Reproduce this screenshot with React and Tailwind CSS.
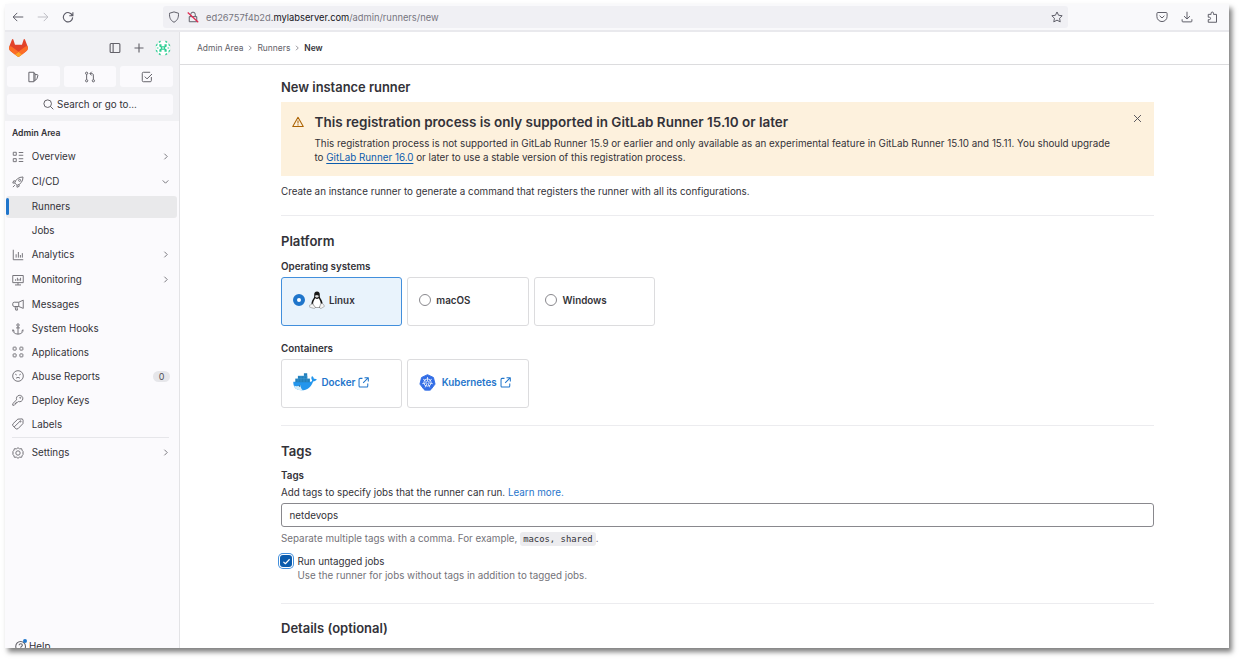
import React from "react";

const Icon = ({ children, className = "size-3", w = 1.4 }) => (
  <svg viewBox="0 0 16 16" fill="none" stroke="currentColor" strokeWidth={w} strokeLinejoin="round" className={`shrink-0 ${className}`}>
    {children}
  </svg>
);

const icons = {
  overview: <><rect x="1.7" y="1.7" width="4" height="4" /><rect x="1.7" y="10.2" width="4" height="4" /><path d="M9 2h6M9 5.700h6M9 10.300h6M9 14h6" /></>,
  rocket: <><path d="M5.200 10.800 3.600 9.200C5 4.700 8.600 1.300 14.700 1.300 14.700 7.400 11.300 11 6.800 12.400L5.200 10.800ZM4.600 6.500H2.200L1 9.300l2.600.3M9.500 11.400v2.400L6.700 15l-.3-2.600M3.800 12.200l-2.600 2.600" /><circle cx="10.200" cy="5.800" r="1.400" /></>,
  chart: <path d="M1.700 1v13.300H15M5.500 7v4.500M8.500 4v7.500M11.200 8v3.500M13.800 5.500v6" />,
  monitor: <path d="M1 2h14v9.500H1zM4 14.600h8M8 11.500v3M4.800 7v2M7.200 5v4M9.300 6.500V9M11.400 5v4" />,
  bullhorn: <path d="M9 4.300 15 1.500v11L9 10H3a2 2 0 0 1-2-2V6.300a2 2 0 0 1 2-2h6ZM9 4.300V10M4 10l1 4.800h2.300L6.500 10" />,
  hook: <><circle cx="8" cy="2.700" r="1.600" /><path d="M8 4.300V15M5.500 6.500h5M1.200 11V9M1.200 9l2.300 2M1.200 9c0 3.500 2.500 5.800 6.800 5.800s6.800-2.300 6.800-5.800l-2.300 2" /></>,
  apps: <><rect x="1.500" y="1.500" width="4" height="4" rx=".7" /><rect x="10.500" y="1.500" width="4" height="4" rx=".7" /><rect x="1.500" y="10.500" width="4" height="4" rx=".7" /><rect x="10.500" y="10.500" width="4" height="4" rx=".7" /></>,
  frown: <><circle cx="8" cy="8" r="7.100" /><path d="M5.300 11.200c1.300-1.700 4.100-1.700 5.400 0M4.300 5.500l2 1.200M11.700 5.500l-2 1.200" /></>,
  key: <><path d="M6.200 7.700A4.300 4.300 0 1 1 8.500 10L7 11.200H5.500v1.500H4V14l-1 1H1v-2.200l5.200-5.100Z" /><circle cx="11" cy="5" r=".7" /></>,
  label: <><path d="M1 8 7.800 1.500l6-.3 1 1.800-.2 4.500L8 14.300l-2.400.4L1 10.200V8ZM2.800 12 10.500 4.500" /><circle cx="11.300" cy="4.500" r=".8" /></>,
  settings: <><path d="m8 .9 1.900 1.500 3-.1.700 2.700 1.600 1.300-.9 1.700.9 1.700-1.600 1.300-.7 2.700-3-.1L8 15.100l-1.900-1.500-3 .1-.7-2.700L.8 9.700 1.700 8 .8 6.300 2.400 5l.7-2.700 3 .1z" /><circle cx="8" cy="8" r="2.900" /></>,
};

const Chevron = ({ down }) => (
  <Icon className="size-[9px] text-[#626168]" w={1.500}>
    <path d={down ? "M3 6 8 11 13 6" : "M6 3 11 8 6 13"} />
  </Icon>
);

const nav = [
  { label: "Overview", icon: "overview", h: "h-[25px]", chev: "right" },
  { label: "CI/CD", icon: "rocket", h: "h-[25px]", chev: "down" },
  { label: "Runners", h: "h-[25px]", active: true },
  { label: "Jobs", h: "h-[23px]" },
  { label: "Analytics", icon: "chart", h: "h-[25px]", chev: "right" },
  { label: "Monitoring", icon: "monitor", h: "h-[25px]", chev: "right" },
  { label: "Messages", icon: "bullhorn", h: "h-[25px]" },
  { label: "System Hooks", icon: "hook", h: "h-[23px]" },
  { label: "Applications", icon: "apps", h: "h-6" },
  { label: "Abuse Reports", icon: "frown", h: "h-6", badge: "0" },
  { label: "Deploy Keys", icon: "key", h: "h-6" },
  { label: "Labels", icon: "label", h: "h-6" },
];

const NavItem = ({ label, icon, h, chev, active, badge }) => (
  <div className={`flex items-center ${h}`}>
    <div className={`ml-px flex h-[22px] w-[170.500px] items-center rounded-[3px] pr-[6.500px] ${active ? "bg-[#e9e9eb]" : ""}`}>
      <span className={`h-[17px] w-[2.500px] rounded-full ${active ? "bg-[#1f75cb]" : ""}`} />
      <span className="ml-[3.300px] w-5 text-[#737278]">{icon && <Icon w={1.300}>{icons[icon]}</Icon>}</span>
      <span className="flex-1 whitespace-nowrap pb-px">{label}</span>
      {chev && <Chevron down={chev === "down"} />}
      {badge && <span className="rounded-full bg-[#e6e6ea] px-[5.500px] text-[9px] leading-[11px] text-[#535158]">{badge}</span>}
    </div>
  </div>
);

const GitLabLogo = () => (
  <svg viewBox="0 0 25 24" className="h-[18px] w-[19px]">
    <path d="m24.507 9.500-.034-.09L21.082.562a.896.896 0 0 0-1.694.091l-2.290 7.010H7.825L5.535.653a.898.898 0 0 0-1.694-.09L.451 9.411.416 9.500a6.297 6.297 0 0 0 2.090 7.278l.012.010.030.022 5.160 3.867 2.560 1.935 1.554 1.176a1.051 1.051 0 0 0 1.268 0l1.555-1.176 2.560-1.935 5.197-3.890.014-.010A6.297 6.297 0 0 0 24.507 9.500Z" fill="#E24329" />
    <path d="m24.507 9.500-.034-.09a11.440 11.440 0 0 0-4.560 2.051l-7.447 5.632 4.742 3.584 5.197-3.890.014-.010A6.297 6.297 0 0 0 24.507 9.500Z" fill="#FC6D26" />
    <path d="m7.707 20.677 2.560 1.935 1.555 1.176a1.051 1.051 0 0 0 1.268 0l1.555-1.176 2.560-1.935-4.743-3.584-4.755 3.584Z" fill="#FCA326" />
    <path d="M5.010 11.461a11.430 11.430 0 0 0-4.560-2.050L.416 9.500a6.297 6.297 0 0 0 2.090 7.278l.012.010.030.022 5.160 3.867 4.745-3.584-7.444-5.632Z" fill="#FC6D26" />
  </svg>
);

const Avatar = () => (
  <svg viewBox="0 0 16 16" className="size-4">
    <clipPath id="av"><circle cx="8" cy="8" r="7.800" /></clipPath>
    <circle cx="8" cy="8" r="7.700" fill="#fff" stroke="#dcdcde" strokeWidth=".4" />
    <g clipPath="url(#av)" fill="#2fce94">
      <path d="M3.500.5h2.200v1.400L4.600 3 3.500 2zM12.500.5h-2.200v1.400L11.400 3l1.100-1zM3.500 15.500h2.200v-1.400L4.600 13l-1.100 1zM12.500 15.500h-2.200v-1.400l1.100-1.100 1.100 1z" />
      <path d="M4.300 4.300h2.200v1.900h3V4.300h2.200v2.200l-1.500.7v1.600l1.500.7v2.200H9.500V9.800h-3v1.900H4.300V9.500l1.500-.7V7.200l-1.500-.7z" />
      <path d="M.5 5 2.500 3.300v1.900L.8 6.500zM15.500 5l-2-1.700v1.900l1.700 1.300zM.5 11l2 1.700v-1.900L.8 9.500zM15.500 11l-2 1.700v-1.900l1.700-1.300zM1.800 7.400h1.700v1.200H1.800zM12.500 7.400h1.700v1.200h-1.700z" />
    </g>
    <path d="M8 7 9 8 8 9 7 8z" fill="#fff" />
  </svg>
);

const Tux = () => (
  <svg viewBox="0 0 16 18" className="h-[18px] w-4 shrink-0">
    <path d="M8 .6c-2 0-2.900 1.400-2.800 3.200.1 1.900.1 2.600-1.100 4.200C2.900 9.800 2.400 11.500 2.500 13.500l1.500 3.300h8l1.600-3.300c.1-2-.6-3.800-1.700-5.500-1.100-1.600-1.200-2.300-1.100-4.200C10.900 2 10 .6 8 .6Z" fill="#161616" />
    <path d="M6.200 7.200C5 9.300 3.800 11 4.200 13.500L6.500 16.400h3.700l1.600-3c.2-2.400-.9-4.100-2-6.200-1.200.9-2.400.9-3.600 0Z" fill="#fff" />
    <path d="M6.200 4.600 8 3.900l1.700.8-.2 1.200-1.600.9-1.700-.9z" fill="#dcdcdc" />
    <path d="M3.200 12.600 6.300 16c.3 1-.7 1.600-1.800 1.300L.7 16.200c-.4-.5.2-1.100 0-2.100.8-.4 1.600-.4 2.500-1.500ZM12.700 12.600c-1 0-1.500.8-1.600 1.800l-.5 2.200c.4 1 1.500 1 2.300.4l2.500-1.600c.3-.5-.4-.8-.7-1.400-.2-1-.8-1.400-2-1.400Z" fill="#f5f5f5" stroke="#777" strokeWidth=".5" />
  </svg>
);

const Docker = () => (
  <svg viewBox="0 0 24 18" className="h-[18px] w-6 shrink-0">
    <path d="M.3 8.800h17.500c1-.3 1.400-1 1.200-1.900-.9-1.200-.9-2.800.1-4 1.100.8 1.700 1.800 1.700 2.900 1.100-.2 2.200 0 3 .5-.7 1.400-2 2-3.700 2.100-2 5.600-5.600 8.900-11.500 8.900C3.400 17.300.100 14.500.300 8.800Z" fill="#2396ed" />
    <path d="M2.300 5.700h14.600v3.500H2.300zM4.900 2.900h9.400v3H4.900zM10.900.2h3.300v3h-3.300z" fill="#207fbd" />
    <path d="M2.300 5.700h14.600M4.900 2.900h6M5 5.700v3.200M8 2.900v6M11 2.900v6M14 2.900v6M10.900 2.900h3.400" stroke="#51a9dc" strokeWidth=".4" fill="none" />
    <path d="M1 12.800c2.500.7 4.600.3 6.500-.5.100 2 .8 3.700 2.300 5C5.400 17.800 2.200 16.300 1 12.800Z" fill="#d5edf9" />
    <circle cx="6.600" cy="13" r=".8" fill="#1b5b86" />
  </svg>
);

const Kubernetes = () => (
  <svg viewBox="0 0 18 18" className="size-[17px] shrink-0">
    <path d="m9 .7 6.300 3 1.700 7-4.400 5.800c-.4.500-.8.600-1.300.6H6.700c-.5 0-.9-.1-1.300-.6L1 10.700l1.700-7z" fill="#326de6" stroke="#326de6" strokeLinejoin="round" />
    <g stroke="#fff" fill="none" strokeWidth=".8">
      <circle cx="9" cy="9" r="3.900" />
      <path d="M9 9V3.200M9 9l4.600-3.600M9 9l5.600 1.300M9 9l2.500 5.200M9 9l-2.500 5.200M9 9l-5.600 1.300M9 9 4.400 5.400" />
    </g>
    <circle cx="9" cy="9" r="1" fill="#326de6" />
  </svg>
);

const External = () => (
  <Icon className="size-[11px]" w={1.500}><path d="M6.500 2H3a1.500 1.500 0 0 0-1.500 1.500v9.700a1.500 1.500 0 0 0 1.500 1.500h9.700a1.500 1.500 0 0 0 1.500-1.500V9.500M9.500 1h5.500v5.500M15 1 7.500 8.500" /></Icon>
);

const Radio = ({ on }) => (
  <span className={`size-[12px] shrink-0 rounded-full border ${on ? "border-[4px] border-[#1f75cb] bg-white" : "border-[#89888d] bg-white"}`} />
);

const Card = ({ active, children }) => (
  <div className={`flex h-[49px] w-[121.300px] items-center rounded-[3px] border pb-[2.500px] pl-[10.500px] font-semibold ${active ? "border-[#428fdc] bg-[#e9f3fc]" : "border-[#dcdcde]"}`}>{children}</div>
);

const Divider = () => <div className="h-px w-full bg-[#ececef]" />;

const Crumb = () => <Icon className="size-2 text-[#737278]" w={1.500}><path d="M6 3.500 10.500 8 6 12.500" /></Icon>;

export default function App() {
  return (
    <div className="h-[662px] w-[1242px] overflow-hidden bg-white pl-[5px] pt-1 font-['Inter','Liberation_Sans',sans-serif] text-[9.820px] leading-[14px] text-[#333238]">
      <div className="flex h-[644px] w-[1224px] flex-col overflow-hidden bg-white shadow-[3px_4px_5px_0_rgba(0,0,0,0.5)]">
        <div className="flex h-7 shrink-0 items-center border-b-2 border-[#e9e9ed] bg-[#f9f9fb] text-[#5b5b66]">
          <div className="flex w-[158px] items-center pl-[7px]">
            <Icon className="size-3" w={1.300}><path d="M15 8H1.500M7 2.500 1.500 8 7 13.500" /></Icon>
            <Icon className="ml-[13px] size-3 text-[#bdbdc3]" w={1.300}><path d="M1 8h13.500M9 2.500 14.500 8 9 13.500" /></Icon>
            <Icon className="ml-[13px] size-3" w={1.500}><path d="M13.800 6.100A6.200 6.200 0 1 0 14.200 8.500M14.500 1.500v4.800H9.700" /></Icon>
          </div>
          <div className="flex h-[22px] w-[905px] items-center rounded-[3px] bg-[#f0f0f4] px-[5px]">
            <Icon className="size-3" w={1.300}><path d="M8 1.200 14 3c.2 5.500-1 9.500-6 12C3 12.500 1.800 8.500 2 3z" /></Icon>
            <svg viewBox="0 0 16 16" className="ml-[7px] size-3" fill="none" strokeWidth="1.300">
              <path d="M5 7V4.500a3 3 0 0 1 6 0V7M3 14.300h10V7.500H3z" stroke="#5b5b66" />
              <path d="m1 2 14 13" stroke="#e22850" strokeWidth="1.600" />
            </svg>
            <span className="ml-[7px] flex-1 pt-px text-[9.340px] text-[#77767f]">ed26757f4b2d.<span className="text-[#15141a]">mylabserver.com</span>/admin/runners/new</span>
            <Icon className="size-3" w={1.300}><path d="m8 1.300 2.100 4.400 4.800.6-3.500 3.400.9 4.800L8 12.200l-4.300 2.300.9-4.800L1.100 6.300l4.800-.6z" /></Icon>
          </div>
          <div className="flex flex-1 justify-end gap-[13px] pr-[11px]">
            <Icon w={1.300}><path d="M2.500 2h11a1.300 1.300 0 0 1 1.300 1.300v4a6.800 6.800 0 0 1-13.600 0v-4A1.300 1.300 0 0 1 2.500 2ZM4.800 6.300 8 9.300l3.200-3" /></Icon>
            <Icon w={1.300}><path d="M8 1v9.500M4 6.800l4 3.900 4-3.900M1.500 11v2.500a1 1 0 0 0 1 1h11a1 1 0 0 0 1-1V11" /></Icon>
            <Icon w={1.300}><path d="M3 4.500h3.800V3a1.600 1.600 0 0 1 3.200 0v1.500h4V15H3v-3.500h1.500a1.600 1.600 0 0 0 0-3.200H3z" /></Icon>
          </div>
        </div>

        <div className="flex min-h-0 flex-1">
          <aside className="flex w-[175px] shrink-0 flex-col border-r border-[#e3e3e6] bg-[#fbfafd]">
            <div className="flex h-[89px] shrink-0 flex-col bg-[#f1f1f4] pl-0.5 pr-[6px]">
              <div className="flex h-8 items-center pl-[1.500px] pr-[2.500px]">
                <GitLabLogo />
                <div className="flex flex-1 items-center justify-end text-[#626168]">
                  <Icon className="size-3" w={1.500}><rect x="1.500" y="2" width="13" height="12" rx="1.300" /><path d="M5.500 2v12" /></Icon>
                  <Icon className="ml-[12px] mr-[10px] size-3" w={1.500}><path d="M8 2v12M2 8h12" /></Icon>
                  <Avatar />
                </div>
              </div>
              <div className="mt-0.5 flex gap-1 text-[#626168]">
                <div className="flex h-[21px] flex-1 items-center justify-center rounded-[3px] bg-[#fbfafd]"><Icon className="size-3" w={1.300}><path d="M2.500 1.700h6.700V14.300H2.500zM9.200 2.700l1.500.6v9.400l-1.500.6M10.800 4.800h2.700c.8 0 1.200.6 1 1.300l-1.100 3.700c-.5 1.500-1.300 2.200-2.600 2.400" /></Icon></div>
                <div className="flex h-[21px] flex-1 items-center justify-center rounded-[3px] bg-[#fbfafd]"><Icon className="size-3" w={1.300}><circle cx="3.500" cy="3" r="1.500" /><circle cx="3.500" cy="13" r="1.500" /><circle cx="12.500" cy="13" r="1.500" /><path d="M3.500 4.600v6.800M12.500 11.400V5.500c0-1.300-.7-2-2-2H8M10.300 1 7.800 3.500 10.300 6" /></Icon></div>
                <div className="flex h-[21px] flex-1 items-center justify-center rounded-[3px] bg-[#fbfafd]"><Icon className="size-3" w={1.300}><path d="M13.800 8v4.800a1.500 1.500 0 0 1-1.500 1.500H3.200a1.500 1.500 0 0 1-1.500-1.500V3.200a1.500 1.500 0 0 1 1.500-1.500h9M5 7.500l3 3L14.700 4" /></Icon></div>
              </div>
              <div className="mt-[7px] flex h-[21px] items-center justify-center gap-[3px] rounded-[3px] bg-[#fbfafd]">
                <Icon className="size-[11px] text-[#535158]" w={1.300}><circle cx="6.800" cy="6.800" r="5.500" /><path d="m10.800 10.800 4.200 4.200" /></Icon>
                <span className="-mt-px">Search or go to...</span>
              </div>
            </div>
            <div className="flex h-[23px] shrink-0 items-center pl-[7px] pt-px text-[8.600px] font-semibold">Admin Area</div>
            <nav className="flex flex-1 flex-col">
              {nav.map((n) => <NavItem key={n.label} {...n} />)}
              <div className="mb-[2px] ml-[7px] mr-[10px] mt-px h-px bg-[#e6e6ea]" />
              <NavItem label="Settings" icon="settings" h="h-[25px]" chev="right" />
            </nav>
            <div className="-mb-[5px] flex h-[14px] shrink-0 items-center pl-[10px]">
              <span className="relative mr-[2px] size-3 text-[#626168]">
                <Icon><circle cx="7.500" cy="8.500" r="6.500" /><path d="M5.500 7c0-2.700 4.300-2.500 4.300 0 0 1.500-2.200 1.600-2.200 3.300" /></Icon>
                <span className="absolute -top-px right-0 size-1 rounded-full bg-[#1f75cb]" />
              </span>
              Help
            </div>
          </aside>

          <main className="flex min-w-0 flex-1 flex-col">
            <div className="flex h-[33px] shrink-0 items-center gap-[3px] border-b border-[#dcdcde] pl-[17px] text-[8.450px] text-[#626168]">
              <span>Admin Area</span><Crumb /><span>Runners</span><Crumb /><span className="font-semibold text-[#333238]">New</span>
            </div>
            <div className="ml-[101px] w-[873px]">
              <h1 className="pt-[14px] text-[12.900px] font-semibold leading-[18px]">New instance runner</h1>
              <div className="mt-[5px] flex h-[74px] bg-[#fdf1dd] pl-[10.500px] pt-3">
                <Icon className="mt-[2px] size-3 text-[#ab6100]" w={1.400}><path d="M8 1.800 15 14H1zM8 6v4M8 11v1.500" /></Icon>
                <div className="ml-[11px] w-[811px]">
                  <h2 className="text-[13.480px] font-semibold leading-4">This registration process is only supported in GitLab Runner 15.10 or later</h2>
                  <p className="mt-[6px] whitespace-nowrap leading-[14px]">This registration process is not supported in GitLab Runner 15.9 or earlier and only available as an experimental feature in GitLab Runner 15.10 and 15.11. You should upgrade<br />to <a className="text-[#0b5cad] underline underline-offset-2">GitLab Runner 16.0</a> or later to use a stable version of this registration process.</p>
                </div>
                <Icon className="-mt-px ml-[6px] size-[11px] text-[#535158]" w={1.400}><path d="m3 3 10 10M13 3 3 13" /></Icon>
              </div>
              <p className="mb-[17px] mt-2">Create an instance runner to generate a command that registers the runner with all its configurations.</p>
              <Divider />
              <h2 className="mt-4 text-[13.100px] font-semibold leading-[18px]">Platform</h2>
              <div className="mt-[9px] font-semibold">Operating systems</div>
              <div className="mt-[4px] flex gap-[5px]">
                <Card active><Radio on /><span className="ml-[4px] mr-[4.500px]"><Tux /></span>Linux</Card>
                <Card><Radio /><span className="ml-[5.500px]">macOS</span></Card>
                <Card><Radio /><span className="ml-[5.500px]">Windows</span></Card>
              </div>
              <div className="mt-[15px] font-semibold">Containers</div>
              <div className="mt-[4px] flex gap-[5px] text-[#1f75cb]">
                <Card><Docker /><span className="ml-[5px] mr-[3px]">Docker</span><External /></Card>
                <Card><Kubernetes /><span className="ml-[6px] mr-[3px]">Kubernetes</span><External /></Card>
              </div>
              <div className="mt-[17px]"><Divider /></div>
              <h2 className="mt-4 text-[13.100px] font-semibold leading-[18px]">Tags</h2>
              <label className="mt-[8px] block font-semibold">Tags</label>
              <div className="mt-[3px]">Add tags to specify jobs that the runner can run. <a className="text-[#1f75cb]">Learn more.</a></div>
              <div className="mt-[4px] flex h-6 items-center rounded-[3px] border border-[#89888d] pl-[7.500px]">netdevops</div>
              <div className="mt-[4px] text-[#737278]">Separate multiple tags with a comma. For example, <code className="rounded-[3px] bg-[#ececef] px-[3px] py-[2px] font-['DejaVu_Sans_Mono',monospace] text-[8.900px] text-[#333238]">macos, shared</code>.</div>
              <div className="mt-[8px] flex">
                <span className="ml-[-1px] mr-[5.500px] mt-px flex size-3 shrink-0 items-center justify-center rounded-[3px] bg-[#0b5cad] text-white shadow-[0_0_0_1px_#fff,0_0_0_2px_#428fdc]"><Icon className="size-[9px]" w={2}><path d="m2.500 8.500 3.500 3.500L13.500 4" /></Icon></span>
                <div><div>Run untagged jobs</div><div className="text-[#737278]">Use the runner for jobs without tags in addition to tagged jobs.</div></div>
              </div>
              <div className="mt-[21px]"><Divider /></div>
              <h2 className="mt-[15px] text-[13px] font-semibold leading-[18px]">Details (optional)</h2>
            </div>
          </main>
        </div>
      </div>
    </div>
  );
}
